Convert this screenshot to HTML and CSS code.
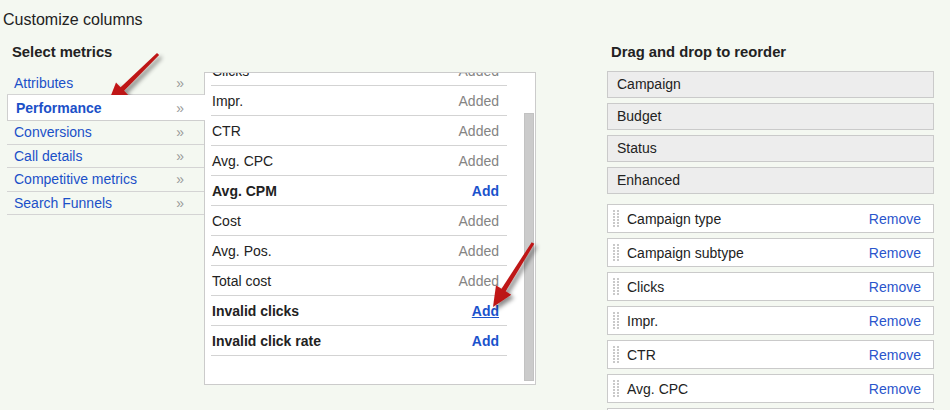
FILE: index.html
```html
<!DOCTYPE html>
<html lang="en">
<head>
<meta charset="utf-8">
<title>Customize columns</title>
<link rel="stylesheet" href="styles.css">
</head>
<body>
<div class="dialog">
  <h1 class="title">Customize columns</h1>
  <div class="columns">
    <section class="metrics">
      <h2 class="section-title">Select metrics</h2>
      <div class="picker">
        <ul class="categories">
          <li class="category"><a class="cat-link">Attributes</a><span class="chev">&raquo;</span></li>
          <li class="category is-active"><a class="cat-link">Performance</a><span class="chev">&raquo;</span></li>
          <li class="category"><a class="cat-link">Conversions</a><span class="chev">&raquo;</span></li>
          <li class="category"><a class="cat-link">Call details</a><span class="chev">&raquo;</span></li>
          <li class="category"><a class="cat-link">Competitive metrics</a><span class="chev">&raquo;</span></li>
          <li class="category"><a class="cat-link">Search Funnels</a><span class="chev">&raquo;</span></li>
        </ul>
        <div class="metric-panel">
          <div class="metric-viewport">
            <ul class="metric-list">
              <li class="metric"><span>Clicks</span><span class="state">Added</span></li>
              <li class="metric"><span>Impr.</span><span class="state">Added</span></li>
              <li class="metric"><span>CTR</span><span class="state">Added</span></li>
              <li class="metric"><span>Avg. CPC</span><span class="state">Added</span></li>
              <li class="metric is-new"><span>Avg. CPM</span><a class="add">Add</a></li>
              <li class="metric"><span>Cost</span><span class="state">Added</span></li>
              <li class="metric"><span>Avg. Pos.</span><span class="state">Added</span></li>
              <li class="metric"><span>Total cost</span><span class="state">Added</span></li>
              <li class="metric is-new"><span>Invalid clicks</span><a class="add is-hover">Add</a></li>
              <li class="metric is-new"><span>Invalid click rate</span><a class="add">Add</a></li>
            </ul>
          </div>
          <div class="scrollbar"><div class="scroll-thumb"></div></div>
        </div>
      </div>
    </section>
    <section class="order">
      <h2 class="section-title">Drag and drop to reorder</h2>
      <ul class="order-list fixed-group">
        <li class="fixed-col">Campaign</li>
        <li class="fixed-col">Budget</li>
        <li class="fixed-col">Status</li>
        <li class="fixed-col">Enhanced</li>
      </ul>
      <ul class="order-list movable-group">
        <li class="movable-col"><span class="grip"></span><span class="col-name">Campaign type</span><a class="remove">Remove</a></li>
        <li class="movable-col"><span class="grip"></span><span class="col-name">Campaign subtype</span><a class="remove">Remove</a></li>
        <li class="movable-col"><span class="grip"></span><span class="col-name">Clicks</span><a class="remove">Remove</a></li>
        <li class="movable-col"><span class="grip"></span><span class="col-name">Impr.</span><a class="remove">Remove</a></li>
        <li class="movable-col"><span class="grip"></span><span class="col-name">CTR</span><a class="remove">Remove</a></li>
        <li class="movable-col"><span class="grip"></span><span class="col-name">Avg. CPC</span><a class="remove">Remove</a></li>
        <li class="movable-col"><span class="grip"></span><span class="col-name">Avg. CPM</span><a class="remove">Remove</a></li>
      </ul>
    </section>
  </div>

  <!-- callout arrows drawn over the dialog -->
  <svg class="callouts" width="950" height="410" viewBox="0 0 950 410" aria-hidden="true">
    <defs>
      <filter id="arrow-shadow" x="-30%" y="-30%" width="160%" height="160%">
        <feDropShadow dx="3" dy="3" stdDeviation="2" flood-color="#000" flood-opacity="0.45"/>
      </filter>
      <linearGradient id="arrow-fill" x1="0" y1="0" x2="1" y2="1">
        <stop offset="0" stop-color="#d41e1e"/>
        <stop offset="1" stop-color="#a80c0c"/>
      </linearGradient>
    </defs>
    <polygon filter="url(#arrow-shadow)" fill="url(#arrow-fill)"
      points="159.1,55.1 124.1,90.8 128.6,95.4 108,103 116,82.6 120.6,87.2 157,52.9"/>
    <polygon filter="url(#arrow-shadow)" fill="url(#arrow-fill)"
      points="534.3,243.8 505.7,291.3 511.2,294.8 493,307 496,285.2 501.5,288.7 531.7,242.2"/>
  </svg>
</div>
</body>
</html>
```

FILE: styles.css
```css
html, body {
  margin: 0;
  padding: 0;
  overflow: hidden;
}

body {
  background: #f4f8f1;
  font-family: "Liberation Sans", Arial, sans-serif;
  color: #222;
  font-size: 14px;
}

ul {
  list-style: none;
  margin: 0;
  padding: 0;
}

a {
  cursor: pointer;
}

.dialog {
  position: relative;
  width: 950px;
  height: 410px;
  overflow: hidden;
}

.title {
  margin: 0;
  padding: 11px 0 0 3px;
  font-size: 16px;
  font-weight: normal;
  line-height: 18px;
}

.columns {
  display: flex;
  align-items: flex-start;
  margin-top: 14px;
}

.section-title {
  margin: 0 0 10px;
  font-size: 14.8px;
  font-weight: bold;
  line-height: 18px;
}

/* left column: categories + metric list */
.metrics {
  width: 529px;
  margin-left: 7px;
  flex-shrink: 0;
}

.metrics .section-title {
  padding-left: 5px;
}

.picker {
  display: flex;
  align-items: flex-start;
}

.categories {
  width: 197px;
  flex-shrink: 0;
}

.category {
  display: flex;
  justify-content: space-between;
  height: 22.5px;
  line-height: 23.5px;
  padding: 0 20px 0 7px;
  border-bottom: 1px solid #d4d4d4;
}

.category:first-child {
  height: 23px;
  line-height: 24px;
}

.cat-link {
  color: #1b50c8;
}

.chev {
  color: #9a9a9a;
}

.category.is-active {
  position: relative;
  z-index: 1;
  height: 25px;
  line-height: 26px;
  margin-right: -1px;
  padding: 0 21px 0 8px;
  background: #fff;
  border-left: 1px solid #cfcfcf;
  border-bottom-color: #cfcfcf;
}

.category.is-active .cat-link {
  font-weight: bold;
}

.metric-panel {
  display: flex;
  box-sizing: border-box;
  width: 332px;
  height: 313px;
  margin-top: 1px;
  background: #fff;
  border: 1px solid #cbcbcb;
}

.metric-viewport {
  flex: 1;
  overflow: hidden;
  padding: 0 17px 0 6px;
}

.metric-list {
  margin-top: -17px;
}

.metric {
  display: flex;
  justify-content: space-between;
  align-items: center;
  height: 29px;
  padding: 0 8px 0 1px;
  border-bottom: 1px solid #d3d3d3;
}

.metric.is-new {
  font-weight: bold;
}

.state {
  color: #848484;
}

.add {
  color: #1a52cc;
  font-weight: bold;
}

.add.is-hover {
  text-decoration: underline;
}

.scrollbar {
  display: flex;
  flex-direction: column;
  width: 10px;
  margin-right: 1px;
  padding: 40px 0 3px;
}

.scroll-thumb {
  flex: 1;
  box-sizing: border-box;
  background: #cbcbcb;
  border: 1px solid #c2c2c2;
}

/* right column: chosen columns */
.order {
  width: 327px;
  margin-left: 71px;
  flex-shrink: 0;
}

.order .section-title {
  padding-left: 4px;
}

.movable-group {
  margin-top: 10px;
}

.fixed-col,
.movable-col {
  box-sizing: border-box;
  border: 1px solid #cacaca;
}

.fixed-col + .fixed-col,
.movable-col + .movable-col {
  margin-top: 5px;
}

.fixed-col {
  height: 27px;
  line-height: 25px;
  padding-left: 9px;
  background: #ededed;
}

.movable-col {
  display: flex;
  align-items: center;
  height: 29px;
  padding: 0 12px 0 5px;
  background: #fff;
}

.grip {
  width: 6px;
  height: 17px;
  margin-right: 8px;
  background-image:
    linear-gradient(to right, transparent 2px, #fff 2px),
    linear-gradient(to bottom, #c9c9c9 2px, transparent 2px);
  background-size: 4px 3px;
}

.remove {
  margin-left: auto;
  color: #2a55cc;
}

.callouts {
  position: absolute;
  top: 0;
  left: 0;
  pointer-events: none;
}
```
